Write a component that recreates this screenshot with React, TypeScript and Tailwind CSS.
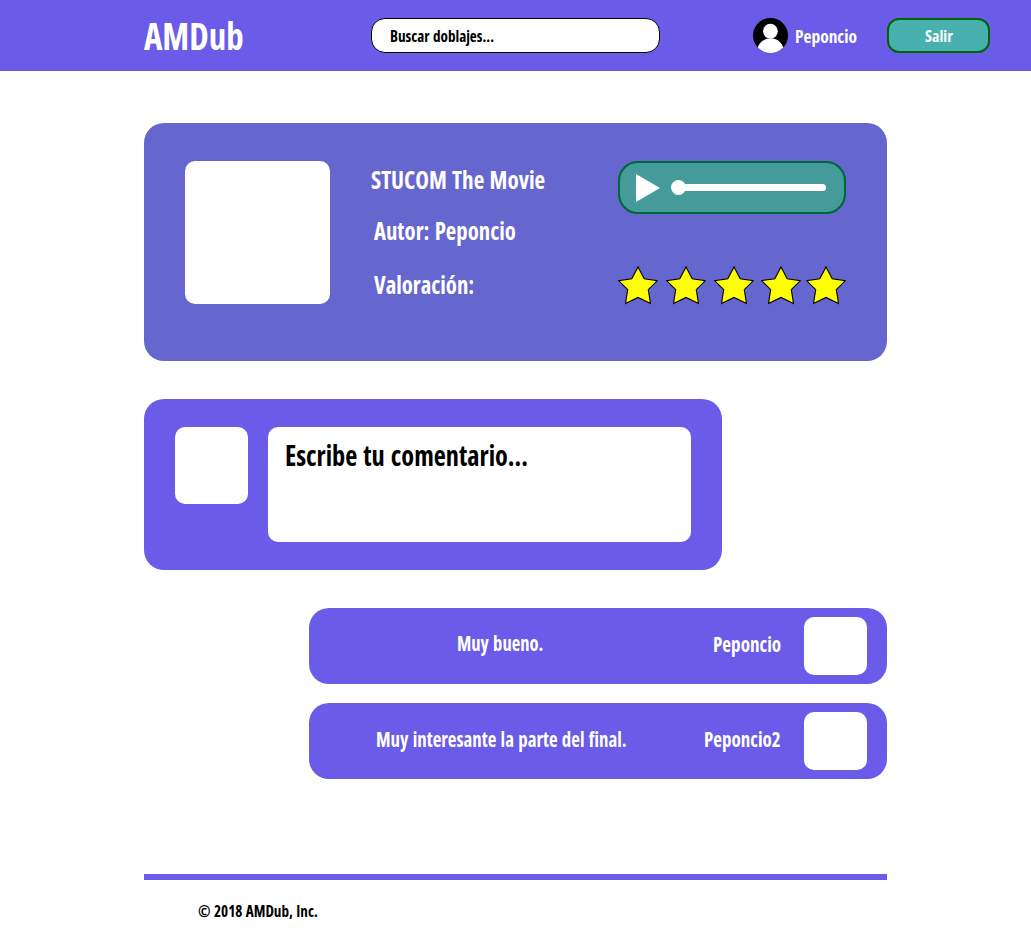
import { useLayoutEffect, useRef, useState } from "react";

/** One line of condensed text that fills the width of its box. */
function Label({ text, className }: { text: string; className: string }) {
  const box = useRef<HTMLSpanElement>(null);
  const line = useRef<HTMLSpanElement>(null);
  const [scale, setScale] = useState(1);
  useLayoutEffect(() => {
    if (box.current && line.current) {
      setScale(box.current.offsetWidth / line.current.offsetWidth);
    }
  }, [text]);
  return (
    <span
      ref={box}
      className={`block shrink-0 whitespace-nowrap font-['Open_Sans','Noto_Sans',sans-serif] font-bold leading-none [font-stretch:75%] [word-spacing:0.05em] ${className}`}
    >
      <span
        ref={line}
        className="inline-block origin-left align-top"
        style={{ transform: `scaleX(${scale})` }}
      >
        {text}
      </span>
    </span>
  );
}

function Star() {
  return (
    <svg width="40" height="39" viewBox="0 0 40 39" className="block shrink-0">
      <path
        d="M20 0.9L26.2 12.8L39.4 14.6L30.3 23.6L32.5 37.5L20 31.4L7.5 37.5L9.7 23.6L0.6 14.6L13.8 12.8Z"
        fill="#ffff00"
        stroke="#000"
        strokeWidth="1.1"
      />
    </svg>
  );
}

function Header() {
  return (
    <header className="flex h-[71px] items-start bg-[#6a5be8] pl-36 text-white">
      <Label text="AMDub" className="mt-4 w-[100px] text-[38px]" />
      <div className="ml-[127px] mt-[18px] h-[35px] w-[289px] shrink-0 rounded-[14px] border border-black bg-white pl-[18px] pt-[9px] text-black">
        <Label text="Buscar doblajes..." className="w-[104px] text-[16px]" />
      </div>
      <svg width="35" height="35" viewBox="0 0 35 35" className="ml-[93px] mt-[18px] shrink-0">
        <defs>
          <clipPath id="avatar">
            <circle cx="17.5" cy="17.5" r="17.5" />
          </clipPath>
        </defs>
        <g clipPath="url(#avatar)">
          <rect width="35" height="35" fill="#000" />
          <circle cx="17.4" cy="13.2" r="7.4" fill="#fff" />
          <ellipse cx="17.5" cy="33" rx="13.2" ry="12.8" fill="#fff" />
        </g>
      </svg>
      <Label text="Peponcio" className="ml-[7px] mt-[27px] w-[62px] text-[18.5px]" />
      <button className="ml-[30px] mt-[18px] flex h-[35px] w-[103px] shrink-0 justify-center rounded-xl border-2 border-[#006400] bg-[#48b1b0] pl-px pt-2">
        <Label text="Salir" className="w-[28px] text-left text-[16px]" />
      </button>
    </header>
  );
}

function Player() {
  return (
    <div className="flex h-[53px] w-[228px] items-center rounded-[20px] border-2 border-[#006633] bg-[#459a9a] pl-4">
      <svg width="24" height="28" viewBox="0 0 24 28" className="shrink-0">
        <path d="M0 0L24 14L0 28Z" fill="#fff" />
      </svg>
      <div className="ml-[11px] flex w-[155px] items-center">
        <span className="size-[15px] shrink-0 rounded-full bg-white" />
        <span className="-ml-1 h-[7px] flex-1 rounded-r-full bg-white" />
      </div>
    </div>
  );
}

function Movie() {
  return (
    <section className="mt-[52px] flex h-[238px] rounded-[20px] bg-[#6666cf] pl-[41px] pt-[38px] text-white">
      <div className="h-[143px] w-[145px] shrink-0 rounded-[10px] bg-white" />
      <div className="ml-10 w-[248px] pt-[6px]">
        <Label text="STUCOM The Movie" className="ml-px w-[174px] text-[25px]" />
        <Label text="Autor: Peponcio" className="ml-1 mt-[26px] w-[142px] text-[25px]" />
        <Label text="Valoración:" className="ml-1 mt-[29px] w-[100px] text-[25px]" />
      </div>
      <div className="w-[228px]">
        <Player />
        <div className="mt-[52px] flex">
          <Star />
          <div className="ml-2"><Star /></div>
          <div className="ml-2"><Star /></div>
          <div className="ml-[7px]"><Star /></div>
          <div className="ml-[5px]"><Star /></div>
        </div>
      </div>
    </section>
  );
}

function CommentForm() {
  return (
    <section className="mt-[38px] flex h-[171px] w-[578px] rounded-[20px] bg-[#6a5be8] pl-[31px] pt-7">
      <div className="h-[77px] w-[73px] rounded-[10px] bg-white" />
      <div className="ml-5 h-[115px] w-[423px] rounded-[10px] bg-white pl-[17px] pt-[13px] text-black">
        <Label text="Escribe tu comentario..." className="w-[243px] text-[29px]" />
      </div>
    </section>
  );
}

function Comments() {
  return (
    <div className="ml-[165px] mt-[38px] flex flex-col gap-[19px] text-white">
      <article className="flex h-[76px] rounded-[20px] bg-[#6a5be8]">
        <Label text="Muy bueno." className="ml-[148px] mt-[25px] w-[86px] text-[20.5px]" />
        <Label text="Peponcio" className="ml-[170px] mt-[26px] w-[68px] text-[20.5px]" />
        <div className="ml-[23px] mt-[9px] h-[58px] w-[63px] rounded-[10px] bg-white" />
      </article>
      <article className="flex h-[76px] rounded-[20px] bg-[#6a5be8]">
        <Label text="Muy interesante la parte del final." className="ml-[67px] mt-[26px] w-[251px] text-[20.5px]" />
        <Label text="Peponcio2" className="ml-[77px] mt-[26px] w-[77px] text-[20.5px]" />
        <div className="ml-[23px] mt-[9px] h-[58px] w-[63px] rounded-[10px] bg-white" />
      </article>
    </div>
  );
}

export default function App() {
  return (
    <div className="h-[950px] w-[1031px] overflow-hidden bg-white">
      <Header />
      <main className="ml-36 w-[743px]">
        <Movie />
        <CommentForm />
        <Comments />
      </main>
      <footer className="ml-36 mt-[95px] w-[743px] border-t-6 border-[#6a5be8] pl-[54px] pt-[23px] text-black">
        <Label text="© 2018 AMDub, Inc." className="w-[120px] text-[16px]" />
      </footer>
    </div>
  );
}
